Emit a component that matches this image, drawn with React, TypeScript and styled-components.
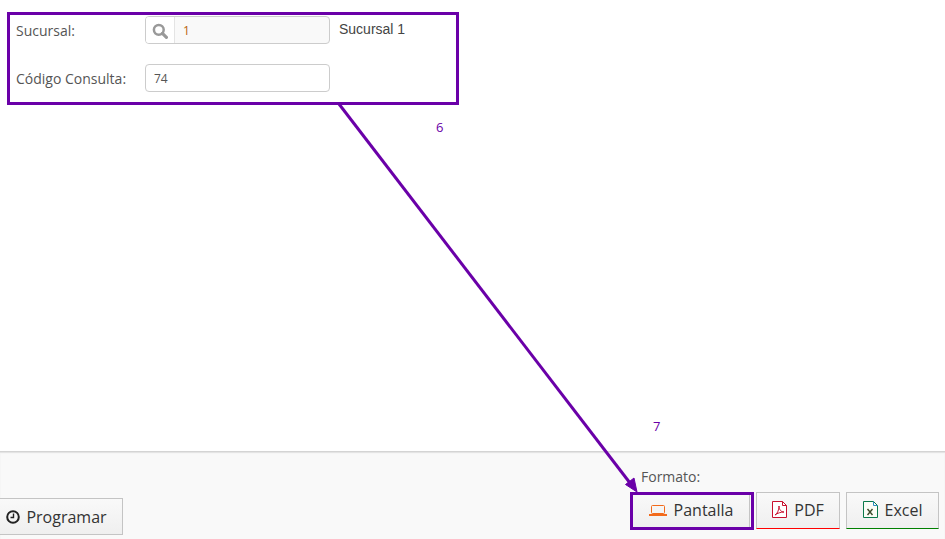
import React from "react";
import styled, { createGlobalStyle } from "styled-components";

const Global = createGlobalStyle`
  html, body { margin: 0; padding: 0; background: #fff; }
  body { font-family: "Open Sans", sans-serif; color: #555; overflow: hidden; }
`;

const violet = "#6a00a8";

const Page = styled.div`
  position: relative;
  width: 945px;
  height: 539px;
  display: flex;
  flex-direction: column;
  overflow: hidden;
`;
const Main = styled.main`
  height: 451px;
  flex: none;
  padding: 16px 0 0 16px;
  box-sizing: border-box;
`;
const Form = styled.form`
  display: grid;
  grid-template-columns: 129px 185px auto;
  grid-auto-rows: 28px;
  row-gap: 20px;
  align-items: center;
  justify-content: start;
`;
const Label = styled.label`
  font-size: 14px;
  line-height: 20px;
  color: #555;
  padding-top: 2px;
`;
const InputBox = styled.div<{ $filled?: boolean }>`
  display: flex;
  align-items: center;
  width: 185px;
  height: 28px;
  box-sizing: border-box;
  border: 1px solid #ccc;
  border-radius: 4px;
  background: ${(p) => (p.$filled ? "#f9f9f9" : "#fff")};
  overflow: hidden;
`;
const Addon = styled.span`
  flex: none;
  width: 29px;
  height: 26px;
  display: flex;
  align-items: center;
  justify-content: center;
  padding-top: 2px;
  box-sizing: border-box;
  background: #fff;
  border-right: 1px solid #e4e4e4;
`;
const Value = styled.span<{ $accent?: boolean; $pad: number }>`
  font-size: 12px;
  padding-left: ${(p) => p.$pad}px;
  color: ${(p) => (p.$accent ? "#b8640f" : "#555")};
`;
const Description = styled.span`
  font-family: "Liberation Sans", Arial, sans-serif;
  font-size: 14px;
  color: #444;
  padding-left: 9px;
  margin-top: -2px;
`;
const Footer = styled.footer`
  flex: 1;
  display: flex;
  justify-content: space-between;
  align-items: flex-end;
  background: #f9f9f9;
  border-top: 1px solid #d4d4d4;
  box-shadow: inset 0 1px 1px #e2e2e2;
  padding: 0 6px 4px 0;
  box-sizing: border-box;
`;
const Button = styled.button<{ $width: number; $line?: string; $shift?: number }>`
  width: ${(p) => p.$width}px;
  height: 37px;
  display: inline-flex;
  align-items: center;
  justify-content: center;
  gap: 7px;
  box-sizing: border-box;
  padding: 0 0 2px ${(p) => p.$shift ?? 0}px;
  font-family: "Open Sans", sans-serif;
  font-size: 16px;
  color: #333;
  background: linear-gradient(#f9f9f9, #efefef);
  border: 1px solid #c4c4c4;
  border-bottom: 1px solid ${(p) => p.$line ?? "#c4c4c4"};
`;
const ScheduleButton = styled(Button)`
  margin-left: -1px;
  padding: 0 9px 0 0;
  gap: 6px;
`;
const OutputGroup = styled.div`
  display: flex;
  flex-direction: column;
  padding-bottom: 6px;
`;
const OutputLabel = styled.div`
  font-size: 14px;
  line-height: 20px;
  color: #555;
  margin: 0 0 5px 11px;
`;
const ButtonRow = styled.div`
  display: flex;
  align-items: flex-end;
  gap: 6px;
`;
const Callout = styled.div<{ $x: number; $y: number; $w: number; $h: number }>`
  position: absolute;
  left: ${(p) => p.$x}px;
  top: ${(p) => p.$y}px;
  width: ${(p) => p.$w}px;
  height: ${(p) => p.$h}px;
  box-sizing: border-box;
  border: 3px solid ${violet};
  pointer-events: none;
`;
const StepNumber = styled.span<{ $x: number; $y: number }>`
  position: absolute;
  left: ${(p) => p.$x}px;
  top: ${(p) => p.$y}px;
  font-size: 13px;
  line-height: 16px;
  color: ${violet};
`;
const ArrowLayer = styled.svg`
  position: absolute;
  inset: 0;
  pointer-events: none;
`;

const Search = () => (
  <svg width="16" height="16" viewBox="0 0 16 16" fill="none" stroke="#999">
    <circle cx="6.8" cy="6.8" r="4.9" strokeWidth="2.5" />
    <path d="M10.4 10.4 14.4 14.4" strokeWidth="3.2" strokeLinecap="round" />
  </svg>
);
const Laptop = () => (
  <svg width="18" height="12" viewBox="0 0 18 12" fill="none">
    <rect x="2.5" y="1.5" width="13" height="8" rx="1" stroke="#f26a1b" />
    <rect x="0" y="10" width="18" height="2" fill="#f26a1b" />
  </svg>
);
const Pdf = () => (
  <svg width="15" height="17" viewBox="0 0 15 17" fill="none" stroke="#c8102e">
    <path d="M.5.5h10l4 4v12H.5z" fill="#fff" />
    <path d="M10.5.5v4h4" />
    <path d="M3 14c2-1 4-4.500 4-9 0 3.500 2 6 5 6-3 0-6.500 1-9 3z" strokeWidth="1" />
  </svg>
);
const Xls = () => (
  <svg width="15" height="17" viewBox="0 0 15 17" fill="none">
    <path d="M.5.5h10l4 4v12H.5z" fill="#fbfdf6" stroke="#0b7a4b" />
    <path d="M10.5.5v4h4" stroke="#2a8cc4" />
    <path d="M4.500 8l5 6M9.500 8l-5 6" stroke="#3c4a2a" strokeWidth="1.400" />
  </svg>
);
const Clock = () => (
  <svg width="14" height="14" viewBox="0 0 14 14" fill="none" stroke="#222">
    <circle cx="7" cy="7" r="5.800" strokeWidth="2" />
    <path d="M7.500 3.500v4H4.500" strokeWidth="1.400" />
  </svg>
);

export default function App() {
  return (
    <Page>
      <Global />
      <Main>
        <Form>
          <Label>Sucursal:</Label>
          <InputBox $filled>
            <Addon>
              <Search />
            </Addon>
            <Value $accent $pad={8}>1</Value>
          </InputBox>
          <Description>Sucursal 1</Description>
          <Label>Código Consulta:</Label>
          <InputBox>
            <Value $pad={8}>74</Value>
          </InputBox>
        </Form>
      </Main>
      <Footer>
        <ScheduleButton type="button" $width={124}>
          <Clock />
          Programar
        </ScheduleButton>
        <OutputGroup>
          <OutputLabel>Formato:</OutputLabel>
          <ButtonRow>
            <Button type="button" $width={120} $shift={2}>
              <Laptop />
              Pantalla
            </Button>
            <Button type="button" $width={84} $line="#ff0000">
              <Pdf />
              PDF
            </Button>
            <Button type="button" $width={93} $line="#008000">
              <Xls />
              Excel
            </Button>
          </ButtonRow>
        </OutputGroup>
      </Footer>
      <Callout $x={630} $y={492} $w={124} $h={38} />
      <Callout $x={7} $y={12} $w={452} $h={93} />
      <StepNumber $x={436} $y={119}>6</StepNumber>
      <StepNumber $x={653} $y={418}>7</StepNumber>
      <ArrowLayer width="945" height="539" viewBox="0 0 945 539">
        <path d="M339 104 630 483" stroke={violet} strokeWidth="3" fill="none" />
        <path d="M637 492 625.500 484.500 634 478z" fill={violet} stroke={violet} strokeWidth="1" />
      </ArrowLayer>
    </Page>
  );
}
